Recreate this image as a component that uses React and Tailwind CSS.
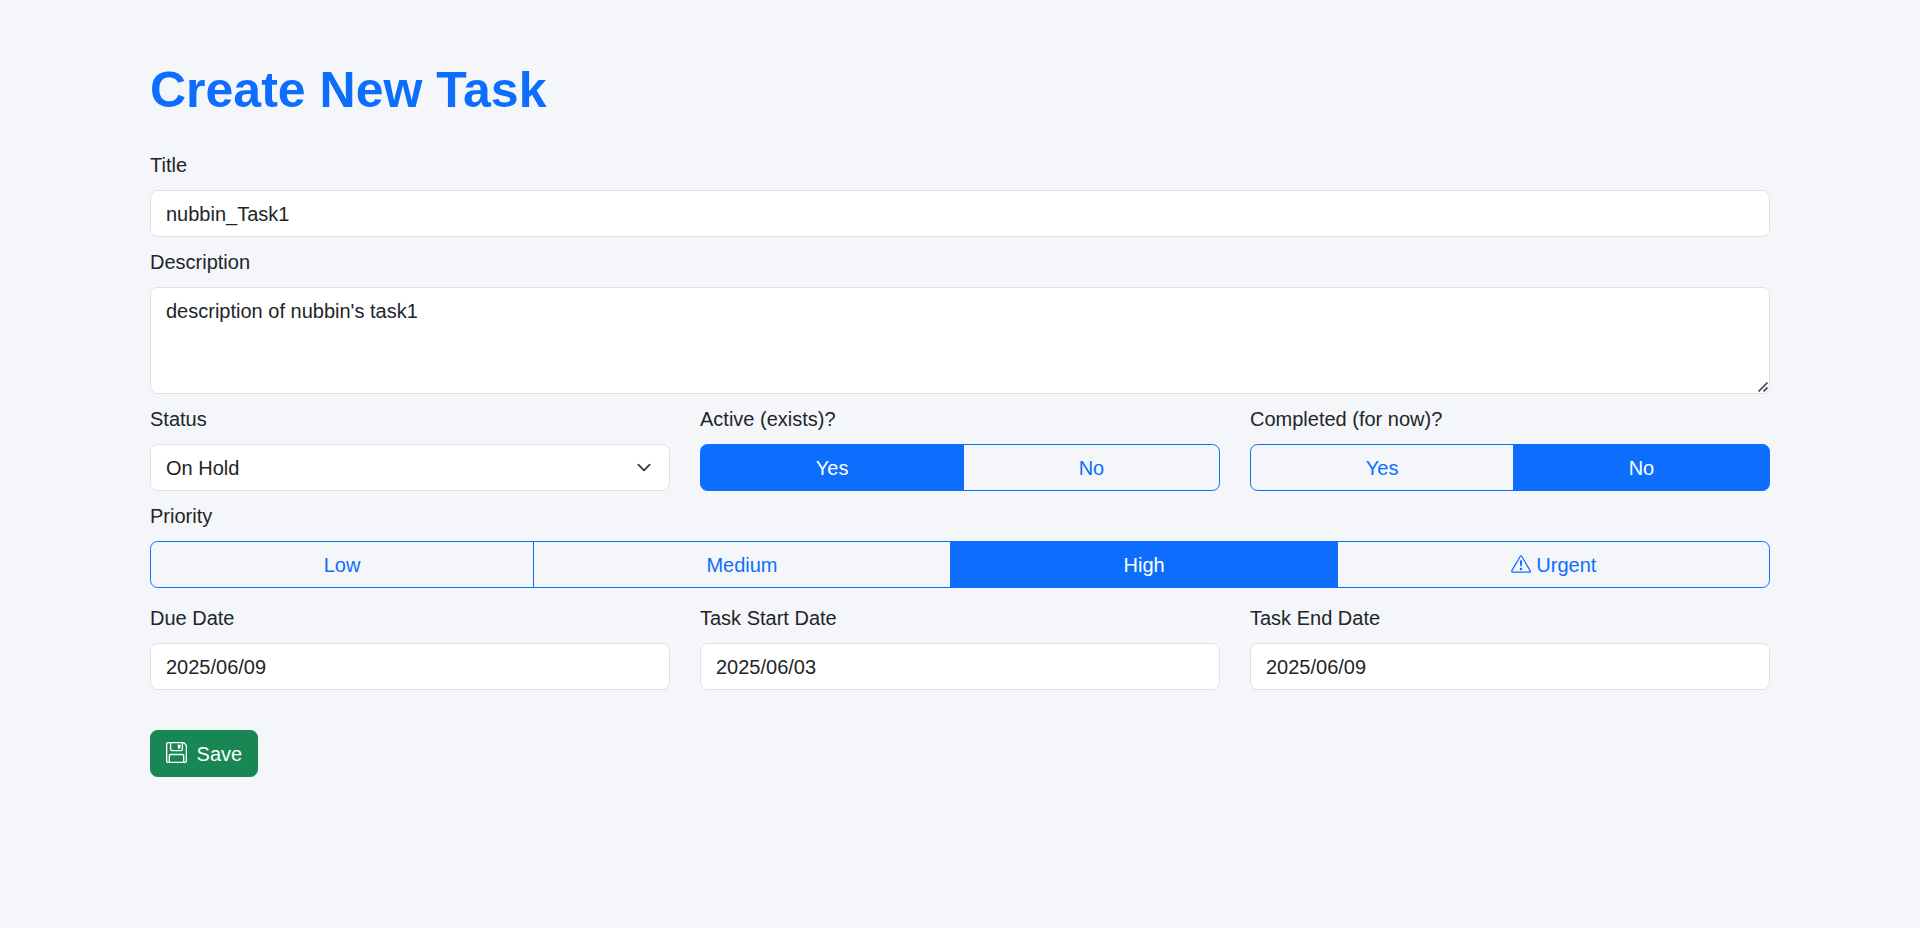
import { BsExclamationTriangle, BsFloppy } from "react-icons/bs";

const control =
  "block w-full rounded-[7.5px] border border-[#dee2e6] bg-white px-[15px] text-[20px] leading-[30px] text-[#212529] outline-none";

function Field({ label, children, className = "" }) {
  return (
    <div className={`min-w-0 ${className}`}>
      <div className="mb-[10px]">{label}</div>
      {children}
    </div>
  );
}

function TextInput({ value }) {
  return <input className={`${control} h-[47px] pt-[8px] pb-[6px]`} defaultValue={value} />;
}

function ButtonGroup({ options, selected }) {
  return (
    <div className="flex w-full">
      {options.map(({ name, icon: Icon }) => (
        <button
          key={name}
          type="button"
          className={`-ml-[1.25px] h-[47px] flex-auto border border-[#0d6efd] px-[15px] text-center first:ml-0 first:rounded-l-[7.5px] last:rounded-r-[7.5px] ${
            name === selected ? "bg-[#0d6efd] text-white" : "text-[#0d6efd]"
          }`}
        >
          {Icon && <Icon className="inline-block size-5 align-[-2.5px]" />}
          {Icon && " "}
          {name}
        </button>
      ))}
    </div>
  );
}

const yesNo = [{ name: "Yes" }, { name: "No" }];
const priorities = [
  { name: "Low" },
  { name: "Medium" },
  { name: "High" },
  { name: "Urgent", icon: BsExclamationTriangle },
];

export default function App() {
  return (
    <main className="min-h-screen bg-[#f4f6fa] pt-[60px] font-['Liberation_Sans',Arial,sans-serif] text-[20px] leading-[30px] text-[#212529]">
      <form className="mx-auto w-[1620px]">
        <h1 className="mb-[30px] text-[50px] leading-[60px] font-bold text-[#0d6efd]">Create New Task</h1>
        <Field label="Title" className="mb-[10px]">
          <TextInput value="nubbin_Task1" />
        </Field>
        <Field label="Description" className="mb-[10px]">
          <div className="relative">
            <textarea
              className={`${control} h-[107px] resize-none py-[7.5px]`}
              defaultValue="description of nubbin's task1"
            />
            <svg
              className="absolute right-[2px] bottom-[2px] h-[10px] w-[10px]"
              viewBox="0 0 10 10"
              fill="none"
              stroke="#555"
              strokeWidth="1.8"
            >
              <path d="M.5 9.5 9.5 .5M5.5 9.5l4-4" />
            </svg>
          </div>
        </Field>
        <div className="mb-[10px] grid grid-cols-3 gap-[30px]">
          <Field label="Status">
            <div className={`${control} flex h-[47px] items-center justify-between`}>
              <span>On Hold</span>
              <svg className="h-[15px] w-5" viewBox="0 0 16 16" fill="none" stroke="#343a40" strokeWidth="2" strokeLinecap="round" strokeLinejoin="round">
                <path d="m2 5 6 6 6-6" />
              </svg>
            </div>
          </Field>
          <Field label="Active (exists)?">
            <ButtonGroup options={yesNo} selected="Yes" />
          </Field>
          <Field label="Completed (for now)?">
            <ButtonGroup options={yesNo} selected="No" />
          </Field>
        </div>
        <Field label="Priority" className="mb-[15px]">
          <ButtonGroup options={priorities} selected="High" />
        </Field>
        <div className="grid grid-cols-3 gap-[30px]">
          <Field label="Due Date">
            <TextInput value="2025/06/09" />
          </Field>
          <Field label="Task Start Date">
            <TextInput value="2025/06/03" />
          </Field>
          <Field label="Task End Date">
            <TextInput value="2025/06/09" />
          </Field>
        </div>
        <button
          type="button"
          className="mt-10 block h-[47px] rounded-[7.5px] border border-[#198754] bg-[#198754] px-[15px] text-white"
        >
          <BsFloppy className="mr-[4px] inline-block size-[21px] align-[-2.5px]" /> Save
        </button>
      </form>
    </main>
  );
}
